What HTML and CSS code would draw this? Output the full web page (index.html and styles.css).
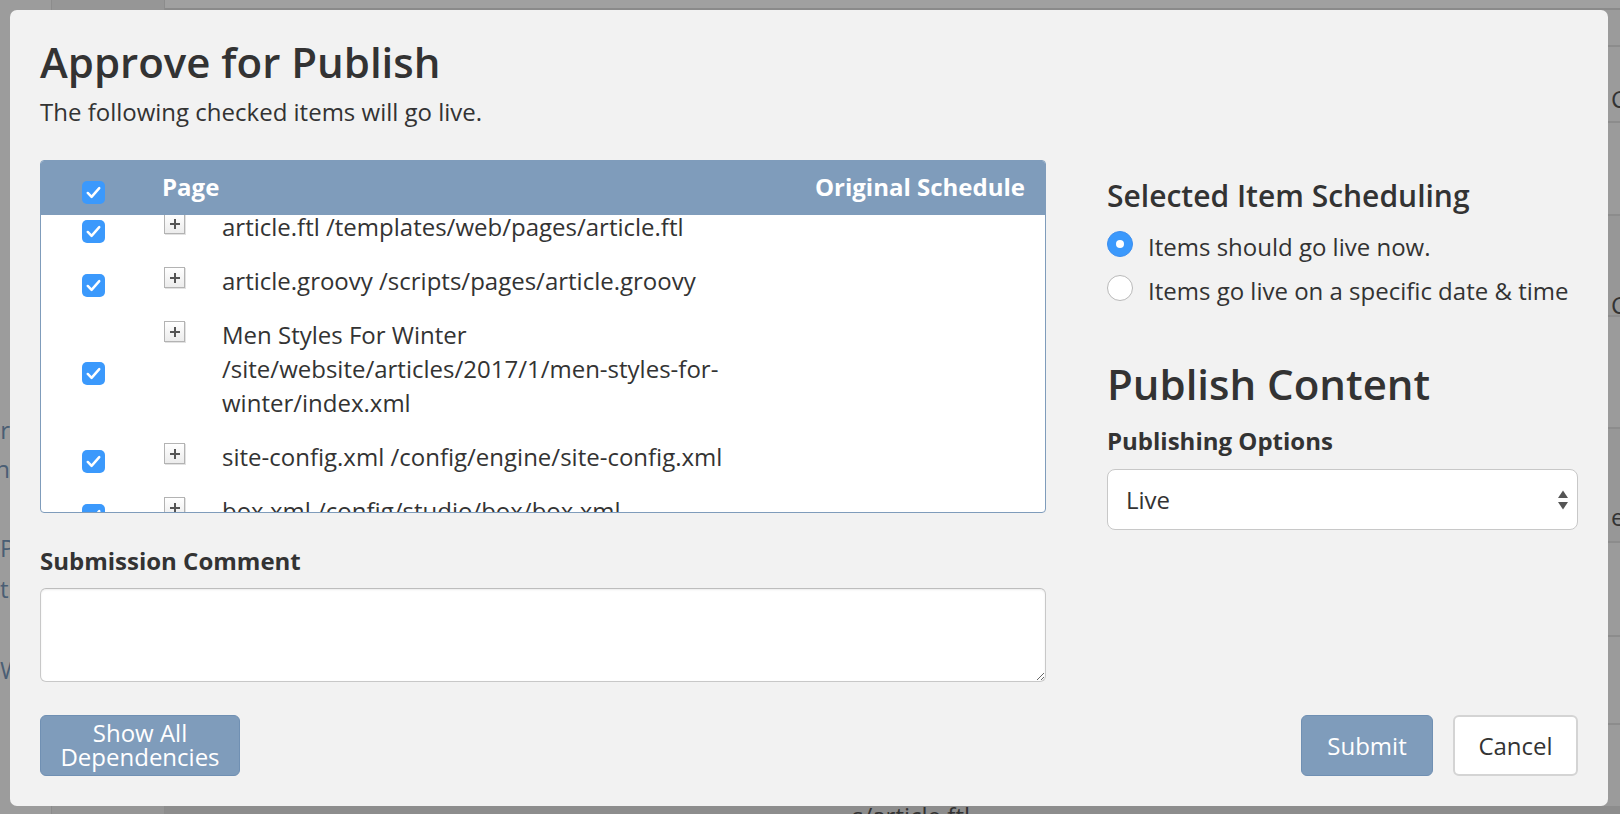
FILE: index.html
```html
<!DOCTYPE html>
<html lang="en">
<head>
<meta charset="utf-8">
<title>Approve for Publish</title>
<link rel="stylesheet" href="styles.css">
</head>
<body>
<div class="backdrop">
  <aside class="bd-side">
    <div class="bd-side-item bd-right i1">Center</div>
    <div class="bd-side-item bd-right i2">Design</div>
    <div class="bd-side-item i3">Pages</div>
    <div class="bd-side-item i4">tings</div>
    <div class="bd-side-item i5">Web</div>
  </aside>
  <div class="bd-nav"></div>
  <main class="bd-content">
    <div class="bd-bar"></div>
    <div class="bd-row r1"></div>
    <div class="bd-row r2">Content</div>
    <div class="bd-row r3"></div>
    <div class="bd-row r4">Content</div>
    <div class="bd-row r5"></div>
    <div class="bd-row r6">edit</div>
    <div class="bd-row r7"></div>
    <div class="bd-row r8"></div>
    <div class="bd-foot">s/article.ftl</div>
  </main>
</div>

<div class="modal">
  <div class="modal-body">
    <section class="col-left">
      <h1 class="title">Approve for Publish</h1>
      <p class="subtitle">The following checked items will go live.</p>

      <div class="items">
        <div class="items-head">
          <div class="cell-check"><span class="cb cb-head"><svg viewBox="0 0 24 24"><path d="M6 12.5l4 4 8-9"/></svg></span></div>
          <div class="cell-page">Page</div>
          <div class="cell-sched">Original Schedule</div>
        </div>
        <div class="items-body">
          <div class="items-list">
            <div class="item">
              <div class="cell-check"><span class="cb"><svg viewBox="0 0 24 24"><path d="M6 12.5l4 4 8-9"/></svg></span></div>
              <div class="cell-name"><span class="plus"></span><span class="name">article.ftl /templates/web/pages/article.ftl</span></div>
            </div>
            <div class="item">
              <div class="cell-check"><span class="cb"><svg viewBox="0 0 24 24"><path d="M6 12.5l4 4 8-9"/></svg></span></div>
              <div class="cell-name"><span class="plus"></span><span class="name">article.groovy /scripts/pages/article.groovy</span></div>
            </div>
            <div class="item">
              <div class="cell-check"><span class="cb"><svg viewBox="0 0 24 24"><path d="M6 12.5l4 4 8-9"/></svg></span></div>
              <div class="cell-name"><span class="plus"></span><span class="name">Men Styles For Winter /site/website/articles/2017/1/men-styles-for-winter/index.xml</span></div>
            </div>
            <div class="item">
              <div class="cell-check"><span class="cb"><svg viewBox="0 0 24 24"><path d="M6 12.5l4 4 8-9"/></svg></span></div>
              <div class="cell-name"><span class="plus"></span><span class="name">site-config.xml /config/engine/site-config.xml</span></div>
            </div>
            <div class="item">
              <div class="cell-check"><span class="cb"><svg viewBox="0 0 24 24"><path d="M6 12.5l4 4 8-9"/></svg></span></div>
              <div class="cell-name"><span class="plus"></span><span class="name">box.xml /config/studio/box/box.xml</span></div>
            </div>
          </div>
        </div>
      </div>

      <label class="field-label" for="comment">Submission Comment</label>
      <textarea id="comment" class="comment"></textarea>
    </section>

    <section class="col-right">
      <h3 class="sched-title">Selected Item Scheduling</h3>
      <div class="radio-row"><span class="radio on"></span><span class="radio-label">Items should go live now.</span></div>
      <div class="radio-row"><span class="radio"></span><span class="radio-label">Items go live on a specific date &amp; time</span></div>

      <h2 class="title pub-title">Publish Content</h2>
      <div class="field-label opt-label">Publishing Options</div>
      <div class="select">
        <span>Live</span>
        <svg class="select-arrows" viewBox="0 0 12 24"><path d="M6 2.5L11 10H1Z"/><path d="M6 21.5L11 14H1Z"/></svg>
      </div>
    </section>
  </div>

  <div class="modal-footer">
    <button class="btn btn-primary btn-deps">Show All<br>Dependencies</button>
    <div class="footer-right">
      <button class="btn btn-primary btn-submit">Submit</button>
      <button class="btn btn-default btn-cancel">Cancel</button>
    </div>
  </div>
</div>
</body>
</html>
```

FILE: styles.css
```css
* { box-sizing: border-box; }

html, body {
  margin: 0;
  padding: 0;
  width: 1620px;
  height: 814px;
  overflow: hidden;
  font-family: "Open Sans", "Noto Sans", "Liberation Sans", sans-serif;
  color: #333;
}

/* ---------- dimmed page behind ---------- */
.backdrop {
  display: flex;
  width: 1620px;
  height: 814px;
  background: #9a9a9a;
}
.bd-side {
  flex: none;
  width: 52px;
  border-right: 1px solid #8c8c8c;
  background: #9c9c9c;
  padding-top: 415px;
  display: flex;
  flex-direction: column;
  overflow: hidden;
}
.bd-side-item {
  width: 10px;
  overflow: hidden;
  font-size: 24px;
  line-height: 30px;
  color: #4a5e74;
  white-space: nowrap;
}
.bd-side-item.bd-right {
  direction: rtl;
  text-align: right;
}
.bd-side-item.i2 { margin-top: 9px; }
.bd-side-item.i3 { margin-top: 49px; }
.bd-side-item.i4 { margin-top: 11px; }
.bd-side-item.i5 { margin-top: 51px; }
.bd-nav {
  flex: none;
  width: 113px;
  border-right: 1px solid #8c8c8c;
  background: #969696;
}
.bd-content {
  flex: 1;
  min-width: 0;
  display: flex;
  flex-direction: column;
  background: #9b9b9b;
}
.bd-bar {
  height: 10px;
  background: #a0a0a0;
  border-bottom: 2px solid #8a8a8a;
}
.bd-row {
  border-bottom: 2px solid #8c8c8c;
  font-size: 24px;
  line-height: 30px;
  color: #333;
  padding-left: 1446px;
  white-space: nowrap;
  overflow: hidden;
}
.bd-row.r1 { height: 37px; }
.bd-row.r2 { height: 76px; padding-top: 37px; }
.bd-row.r3 { height: 93px; }
.bd-row.r4 { height: 101px; padding-top: 74px; background: #979797; }
.bd-row.r5 { height: 112px; }
.bd-row.r6 { height: 114px; padding-top: 73px; background: #979797; }
.bd-row.r7 { height: 94px; }
.bd-row.r8 { height: 88px; }
.bd-foot {
  margin-top: auto;
  height: 8px;
  padding-left: 687px;
  font-size: 24px;
  line-height: 20px;
  color: #333;
  background: #8d8d8d;
  overflow: hidden;
}

/* ---------- modal ---------- */
.modal {
  position: fixed;
  top: 10px;
  left: 10px;
  width: 1598px;
  height: 796px;
  background: #f2f2f2;
  border-radius: 7px;
  padding: 27px 30px 30px;
  display: flex;
  flex-direction: column;
}
.modal-body {
  display: grid;
  grid-template-columns: 1006px 1fr;
  column-gap: 61px;
}
.col-left, .col-right {
  display: flex;
  flex-direction: column;
  align-items: flex-start;
}
.col-left > .items, .col-left > .comment, .col-right > .select { align-self: stretch; }

.title {
  margin: 0;
  font-size: 42px;
  line-height: 50px;
  font-weight: 600;
  color: #333;
}
.subtitle {
  margin: 10px 0 0;
  font-size: 24px;
  line-height: 30px;
}

/* items table */
.items {
  margin-top: 33px;
  border: 1px solid #7f9cbb;
  border-radius: 4px;
  overflow: hidden;
  background: #fff;
}
.items-head {
  display: flex;
  align-items: center;
  height: 54px;
  padding-bottom: 2px;
  background: #7f9cbb;
  color: #fff;
  font-weight: 700;
  font-size: 24px;
  line-height: 34px;
}
.cell-check {
  width: 105px;
  flex: none;
  display: flex;
  justify-content: center;
}
.cell-page { flex: 1; padding-left: 16px; }
.cell-sched { padding-right: 20px; }
.cb-head { margin-top: 11px; }

.items-body {
  height: 297px;
  overflow: hidden;
}
.items-list { margin-top: -11px; }
.item {
  display: flex;
  align-items: center;
}
.cell-name {
  display: flex;
  align-items: flex-start;
  padding: 6px 0 14px 18px;
  font-size: 24px;
  line-height: 34px;
}
.plus {
  position: relative;
  width: 21px;
  height: 21px;
  margin-top: 3px;
  flex: none;
  border: 1px solid #b3b3b3;
  background: linear-gradient(#ffffff, #ececec);
  box-shadow: 1px 1px 0 #e2e2e2;
}
.plus::before, .plus::after {
  content: "";
  position: absolute;
  background: #555;
  left: 50%;
  top: 50%;
}
.plus::before { width: 10px; height: 2px; transform: translate(-50%, -50%); }
.plus::after { width: 2px; height: 10px; transform: translate(-50%, -50%); }
.name {
  margin-left: 37px;
  width: 540px;
  color: #333;
}

/* checkbox */
.cb {
  width: 23px;
  height: 23px;
  border-radius: 5px;
  background: #3b99fc;
  display: flex;
  align-items: center;
  justify-content: center;
}
.cb svg { width: 23px; height: 23px; }
.cb path {
  fill: none;
  stroke: #fff;
  stroke-width: 2.6;
  stroke-linecap: round;
  stroke-linejoin: round;
}

.field-label {
  margin-top: 33px;
  font-size: 24px;
  line-height: 30px;
  font-weight: 700;
  color: #333;
}
.comment {
  display: block;
  margin-top: 12px;
  height: 94px;
  border: 1px solid #c8c8c8;
  border-top-color: #bdbdbd;
  border-radius: 6px;
  background: #fff;
  box-shadow: inset 0 1px 2px rgba(0,0,0,0.08);
  resize: both;
  font-family: inherit;
  font-size: 24px;
}

/* right column */
.sched-title {
  margin: 141px 0 0;
  font-size: 30px;
  line-height: 36px;
  font-weight: 600;
  color: #333;
}
.radio-row {
  display: flex;
  align-items: center;
  height: 44px;
  gap: 15px;
  font-size: 24px;
}
.sched-title + .radio-row { margin-top: 8px; }
.radio {
  width: 26px;
  height: 26px;
  border-radius: 50%;
  background: #fff;
  border: 1px solid #b9b9b9;
  flex: none;
  display: flex;
  align-items: center;
  justify-content: center;
}
.radio.on {
  background: #3b99fc;
  border-color: #3b8ef0;
}
.radio.on::after {
  content: "";
  width: 8px;
  height: 8px;
  border-radius: 50%;
  background: #fff;
}
.radio-label { margin-top: 5px; }

.pub-title { margin-top: 49px; }
.opt-label { margin-top: 17px; }
.select {
  margin-top: 13px;
  height: 61px;
  border: 1px solid #c8c8c8;
  border-radius: 8px;
  background: #fff;
  display: flex;
  align-items: center;
  justify-content: space-between;
  padding: 0 8px 0 18px;
  font-size: 24px;
}
.select-arrows { width: 12px; height: 24px; }
.select-arrows path { fill: #555; }

/* footer */
.modal-footer {
  margin-top: auto;
  display: flex;
  justify-content: space-between;
  align-items: flex-end;
}
.footer-right { display: flex; gap: 20px; }
.btn {
  font-family: inherit;
  font-size: 24px;
  height: 61px;
  border-radius: 6px;
  cursor: pointer;
}
.btn-primary {
  background: #7f9cbb;
  border: 1px solid #7090b3;
  color: #fff;
}
.btn-default {
  background: #fff;
  border: 2px solid #d4d4d4;
  color: #333;
}
.btn-deps {
  width: 200px;
  line-height: 24px;
  padding: 0 4px 2px;
}
.btn-submit { width: 132px; padding-bottom: 2px; }
.btn-cancel { width: 125px; padding-bottom: 2px; }
```
